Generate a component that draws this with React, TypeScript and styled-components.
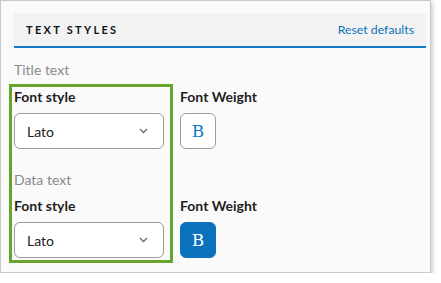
import React from 'react';
import styled, { createGlobalStyle } from 'styled-components';

const GlobalStyle = createGlobalStyle`
  html, body {
    margin: 0;
    padding: 0;
    background: #ffffff;
  }
  body {
    font-family: Lato, "Liberation Sans", sans-serif;
  }
`;

const Card = styled.div`
  box-sizing: border-box;
  width: 431px;
  height: 273px;
  padding: 12px 4px 0 13px;
  background: #fafafa;
  border: 1px solid #c9c9c9;
  box-shadow: 2px 2px 4px rgba(0, 0, 0, 0.18);
`;

const Header = styled.div`
  box-sizing: border-box;
  height: 35px;
  display: flex;
  align-items: center;
  justify-content: space-between;
  padding: 0 12px;
  background: #f2f2f2;
  border-bottom: 2px solid #1479c4;
`;

const HeaderTitle = styled.span`
  font-size: 11px;
  font-weight: 700;
  letter-spacing: 2.3px;
  color: #141414;
  line-height: 14px;
`;

const ResetLink = styled.a`
  font-size: 12.3px;
  color: #0a72bd;
  line-height: 14px;
  margin-top: 1px;
  cursor: pointer;
`;

const SectionLabel = styled.div<{ $top: number }>`
  margin-top: ${(p) => p.$top}px;
  font-size: 14px;
  line-height: 16px;
  color: #8a8a8a;
`;

const Row = styled.div`
  display: flex;
  gap: 7px;
  margin-top: 6px;
`;

const Highlight = styled.div`
  width: 150px;
  margin-left: -5px;
  padding: 2px 6px 2px 2px;
  border: 3px solid #66a52b;
  display: flex;
  flex-direction: column;
`;

const Column = styled.div`
  display: flex;
  flex-direction: column;
  padding-top: 5px;
`;

const FieldLabel = styled.div<{ $top?: number }>`
  margin-top: ${(p) => p.$top ?? 0}px;
  margin-bottom: 8px;
  font-size: 14px;
  font-weight: 700;
  line-height: 16px;
  color: #1e1e1e;
`;

const Select = styled.div`
  box-sizing: border-box;
  width: 150px;
  height: 36px;
  display: flex;
  align-items: center;
  justify-content: space-between;
  padding: 0 15px 0 12px;
  background: #ffffff;
  border: 1px solid #9c9c9c;
  border-radius: 6px;
  font-size: 14px;
  color: #222;
`;

const BoldToggle = styled.button<{ $active: boolean }>`
  box-sizing: border-box;
  width: 36px;
  height: 36px;
  padding: 0;
  display: flex;
  align-items: center;
  justify-content: center;
  border-radius: 6px;
  border: 1px solid ${(p) => (p.$active ? '#0a72bd' : '#9c9c9c')};
  background: ${(p) => (p.$active ? '#0a72bd' : '#ffffff')};
  color: ${(p) => (p.$active ? '#ffffff' : '#1479c4')};
  font-family: "DejaVu Serif", "Liberation Serif", serif;
  font-size: 17px;
  font-weight: 400;
  line-height: 1;
`;

const Chevron = () => (
  <svg width="9" height="6" viewBox="0 0 9 6">
    <path d="M1 1 L4.5 4.5 L8 1" fill="none" stroke="#6b6b6b" strokeWidth="1.3" />
  </svg>
);

const FontSelect = ({ value }: { value: string }) => (
  <Select>
    <span>{value}</span>
    <Chevron />
  </Select>
);

export default function App() {
  return (
    <>
      <GlobalStyle />
      <Card>
        <Header>
          <HeaderTitle>TEXT STYLES</HeaderTitle>
          <ResetLink>Reset defaults</ResetLink>
        </Header>
        <SectionLabel $top={14}>Title text</SectionLabel>
        <Row>
          <Highlight>
            <FieldLabel>Font style</FieldLabel>
            <FontSelect value="Lato" />
            <SectionLabel $top={23}>Data text</SectionLabel>
            <FieldLabel $top={10}>Font style</FieldLabel>
            <FontSelect value="Lato" />
          </Highlight>
          <Column>
            <FieldLabel>Font Weight</FieldLabel>
            <BoldToggle $active={false}>B</BoldToggle>
            <FieldLabel $top={49}>Font Weight</FieldLabel>
            <BoldToggle $active={true}>B</BoldToggle>
          </Column>
        </Row>
      </Card>
    </>
  );
}
